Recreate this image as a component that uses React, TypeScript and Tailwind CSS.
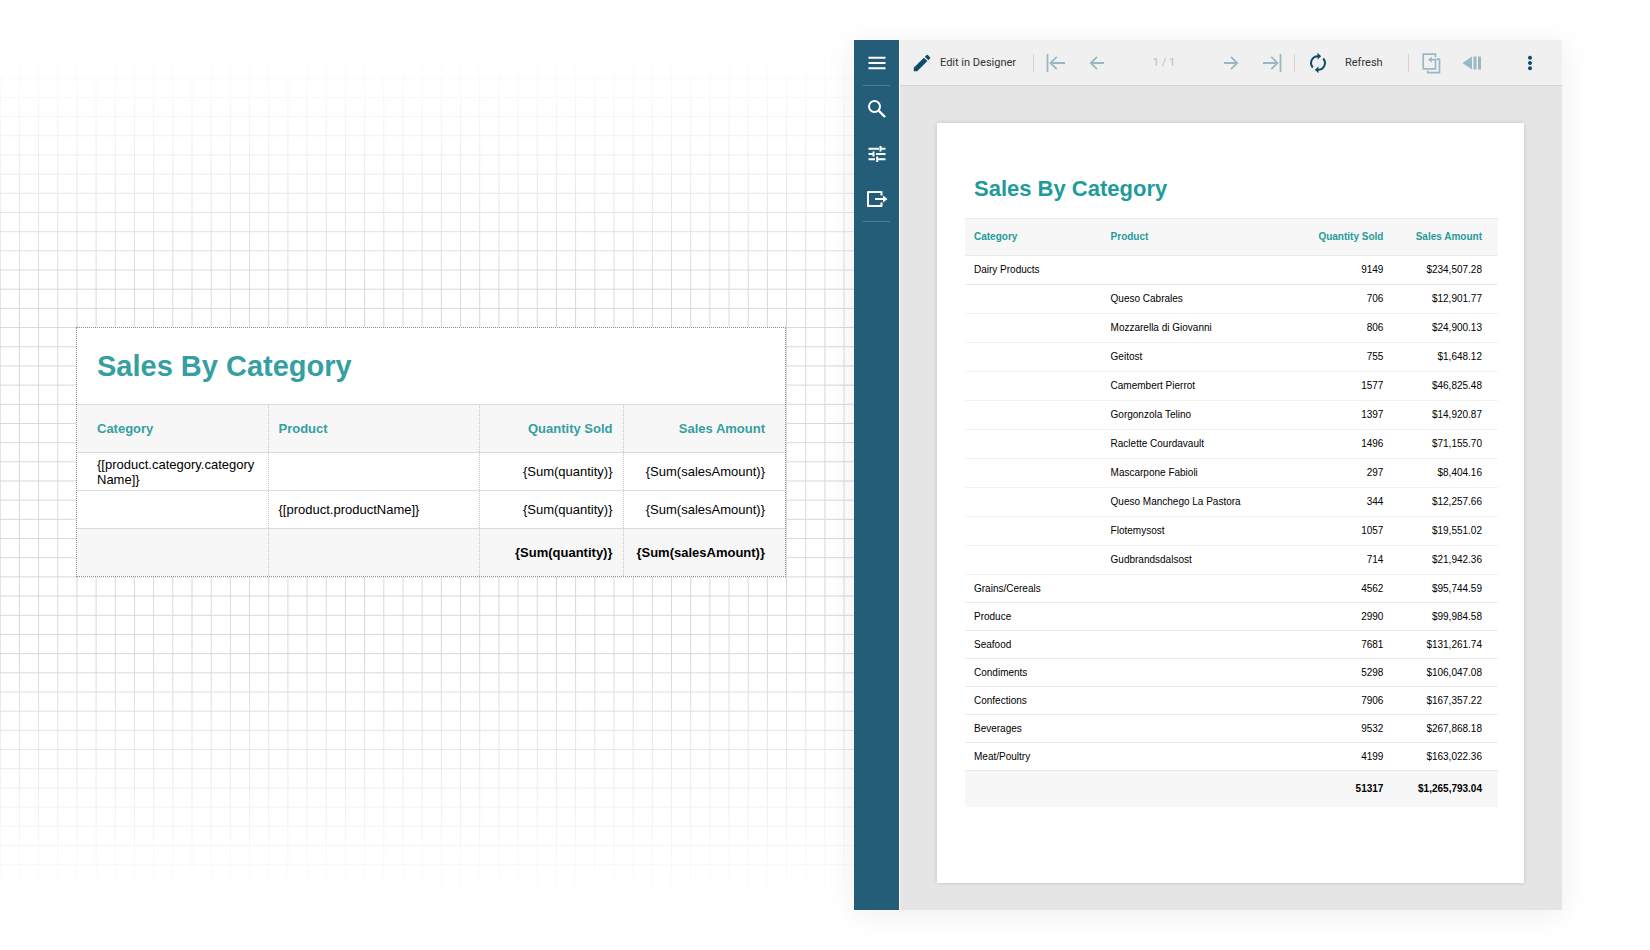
import type { ReactNode } from "react";

const PITCH = 19.18;

type SalesRow = {
  category?: string;
  product?: string;
  quantity: string;
  amount: string;
  expanded?: boolean;
};

const sales: SalesRow[] = [
  { category: "Dairy Products", quantity: "9149", amount: "$234,507.28", expanded: true },
  { product: "Queso Cabrales", quantity: "706", amount: "$12,901.77" },
  { product: "Mozzarella di Giovanni", quantity: "806", amount: "$24,900.13" },
  { product: "Geitost", quantity: "755", amount: "$1,648.12" },
  { product: "Camembert Pierrot", quantity: "1577", amount: "$46,825.48" },
  { product: "Gorgonzola Telino", quantity: "1397", amount: "$14,920.87" },
  { product: "Raclette Courdavault", quantity: "1496", amount: "$71,155.70" },
  { product: "Mascarpone Fabioli", quantity: "297", amount: "$8,404.16" },
  { product: "Queso Manchego La Pastora", quantity: "344", amount: "$12,257.66" },
  { product: "Flotemysost", quantity: "1057", amount: "$19,551.02" },
  { product: "Gudbrandsdalsost", quantity: "714", amount: "$21,942.36" },
  { category: "Grains/Cereals", quantity: "4562", amount: "$95,744.59" },
  { category: "Produce", quantity: "2990", amount: "$99,984.58" },
  { category: "Seafood", quantity: "7681", amount: "$131,261.74" },
  { category: "Condiments", quantity: "5298", amount: "$106,047.08" },
  { category: "Confections", quantity: "7906", amount: "$167,357.22" },
  { category: "Beverages", quantity: "9532", amount: "$267,868.18" },
  { category: "Meat/Poultry", quantity: "4199", amount: "$163,022.36" },
];

function rowClass(row: SalesRow) {
  if (row.product) return "h-[29px] border-b border-[#f1f1f1]";
  if (row.expanded) return "h-[29px] border-b border-[#e9e9e9]";
  return "h-[28px] border-b border-[#e9e9e9]";
}

function GridBackdrop() {
  const columns = Array.from({ length: 120 }, (_, i) => i * PITCH - 0.3);
  const rows = Array.from({ length: 52 }, (_, i) => 1 + i * PITCH);
  return (
    <svg
      aria-hidden="true"
      className="absolute inset-0 h-full w-full [mask-image:linear-gradient(to_bottom,transparent_5%,black_31%,black_69%,transparent_95%)]"
      fill="#d8d8d8"
    >
      {columns.map((x) => (
        <rect key={x} x={x} y="0" width="1" height="100%" />
      ))}
      {rows.map((y) => (
        <rect key={y} x="0" y={y} width="100%" height="1" />
      ))}
    </svg>
  );
}

function DesignTable() {
  const cell = "border-r border-dotted border-r-[#c8c8c8] last:border-r-0";
  return (
    <table className="w-full table-fixed border-collapse bg-white text-[13px] leading-[15px] text-black">
      <colgroup>
        <col className="w-[191px]" />
        <col className="w-[211px]" />
        <col className="w-[144px]" />
        <col />
      </colgroup>
      <thead>
        <tr className="h-[48px] border-y border-[#dcdcdc] bg-[#f7f7f7] text-[#359fa2]">
          <th className={`${cell} pr-2 pl-5 text-left`}>Category</th>
          <th className={`${cell} px-[10px] text-left`}>Product</th>
          <th className={`${cell} px-[10px] text-right`}>Quantity Sold</th>
          <th className={`${cell} pr-5 pl-2 text-right`}>Sales Amount</th>
        </tr>
      </thead>
      <tbody>
        <tr className="h-[38px] border-b border-[#dcdcdc]">
          <td className={`${cell} pr-2 pl-5`}>
            {"{[product.category.category"}
            <wbr />
            {"Name]}"}
          </td>
          <td className={`${cell} px-[10px]`} />
          <td className={`${cell} px-[10px] text-right`}>{"{Sum(quantity)}"}</td>
          <td className={`${cell} pr-5 pl-2 text-right`}>{"{Sum(salesAmount)}"}</td>
        </tr>
        <tr className="h-[38px] border-b border-[#dcdcdc]">
          <td className={`${cell} pr-2 pl-5`} />
          <td className={`${cell} px-[10px]`}>{"{[product.productName]}"}</td>
          <td className={`${cell} px-[10px] text-right`}>{"{Sum(quantity)}"}</td>
          <td className={`${cell} pr-5 pl-2 text-right`}>{"{Sum(salesAmount)}"}</td>
        </tr>
      </tbody>
      <tfoot>
        <tr className="h-[47px] bg-[#f7f7f7] font-bold">
          <td className={`${cell} pr-2 pl-5`} />
          <td className={`${cell} px-[10px]`} />
          <td className={`${cell} px-[10px] text-right`}>{"{Sum(quantity)}"}</td>
          <td className={`${cell} pr-5 pl-2 text-right`}>{"{Sum(salesAmount)}"}</td>
        </tr>
      </tfoot>
    </table>
  );
}

function ReportTable() {
  return (
    <table className="w-full table-fixed border-collapse text-[10px] leading-[12px] text-black">
      <colgroup>
        <col className="w-[26%]" />
        <col className="w-[34%]" />
        <col className="w-[20%]" />
        <col className="w-[20%]" />
      </colgroup>
      <thead>
        <tr className="h-[37px] border-y border-[#ebebeb] bg-[#f7f7f7] text-[#1f9b9b]">
          <th className="pl-[9px] text-left">Category</th>
          <th className="pl-[7px] text-left">Product</th>
          <th className="pr-2 text-right">Quantity Sold</th>
          <th className="pr-4 text-right">Sales Amount</th>
        </tr>
      </thead>
      <tbody>
        {sales.map((row) => (
          <tr key={row.category ?? row.product} className={rowClass(row)}>
            <td className="pl-[9px]">{row.category}</td>
            <td className="pl-[7px]">{row.product}</td>
            <td className="pr-2 text-right">{row.quantity}</td>
            <td className="pr-4 text-right">{row.amount}</td>
          </tr>
        ))}
      </tbody>
      <tfoot>
        <tr className="h-[36px] bg-[#f7f7f7] font-bold">
          <td />
          <td />
          <td className="pr-2 text-right">51317</td>
          <td className="pr-4 text-right">$1,265,793.04</td>
        </tr>
      </tfoot>
    </table>
  );
}

function Icon({ children, className = "size-6" }: { children: ReactNode; className?: string }) {
  return (
    <svg
      aria-hidden="true"
      viewBox="0 0 24 24"
      className={`shrink-0 ${className}`}
      fill="none"
      stroke="currentColor"
      strokeWidth="1.8"
    >
      {children}
    </svg>
  );
}

function SideBar() {
  return (
    <nav className="flex w-[45px] shrink-0 flex-col items-center bg-[#235d78] text-white">
      <button type="button" aria-label="Menu" className="flex h-[45px] items-center">
        <Icon>
          <path d="M3.500 6.700h17M3.500 12h17M3.500 17.300h17" strokeWidth="2" />
        </Icon>
      </button>
      <hr className="w-[27px] border-[#4b7c92]" />
      <button type="button" aria-label="Search" className="flex h-[45px] items-center">
        <Icon>
          <circle cx="9.500" cy="9.500" r="5.500" strokeWidth="2" />
          <path d="M13.500 13.500l6.500 6.500" strokeWidth="2.400" />
        </Icon>
      </button>
      <button type="button" aria-label="Parameters" className="flex h-[45px] items-center">
        <Icon>
          <path
            d="M3.500 6.700h10.500M15.500 4v5.400M15.500 6.700h5M3.500 12h5M8.500 9.400v5.200M11 12h9.500M3.500 17.300h6.500M12.200 14.600v5.400M12.200 17.300h8.300"
            strokeWidth="2"
          />
        </Icon>
      </button>
      <button type="button" aria-label="Export" className="flex h-[45px] items-center">
        <Icon>
          <path d="M16.500 8.500V5H3v14h13.500v-3.500M10 12h9" strokeWidth="2" strokeLinejoin="round" />
          <path d="M18 8.500l4.500 3.500-4.500 3.500z" fill="currentColor" stroke="none" />
        </Icon>
      </button>
      <hr className="w-[27px] border-[#4b7c92]" />
    </nav>
  );
}

function Separator() {
  return <span className="h-[18px] w-px shrink-0 bg-[#d4d4d4]" />;
}

function ToolBar() {
  return (
    <div
      role="toolbar"
      aria-label="Report viewer"
      className="flex h-[46px] items-center border-b border-[#d4d4d4] bg-[#f0f0f0] pl-[11px] font-[Roboto,sans-serif] text-[11px] text-[#333333]"
    >
      <button type="button" className="flex w-[122px] items-center gap-[7px] whitespace-nowrap">
        <Icon className="size-[22px] text-[#0f4c6b]">
          <path
            d="M3 17.250V21h3.750L17.810 9.940l-3.750-3.750zM20.710 7.040a1 1 0 0 0 0-1.410l-2.340-2.340a1 1 0 0 0-1.410 0l-1.830 1.830 3.750 3.750z"
            fill="currentColor"
            stroke="none"
          />
        </Icon>
        <span className="pt-[2px]">Edit in Designer</span>
      </button>
      <Separator />
      <button type="button" aria-label="First page" className="ml-[10px] text-[#9ab8c4]">
        <Icon>
          <path d="M3.500 3v18M21 12H6.500M12.700 5.800L6.500 12l6.200 6.200" />
        </Icon>
      </button>
      <button type="button" aria-label="Previous page" className="ml-[17px] text-[#9ab8c4]">
        <Icon>
          <path d="M19 12H6M12 5.800L5.800 12l6.200 6.200" />
        </Icon>
      </button>
      <span className="flex-1 pt-[2px] text-center text-[#b5c0c6]">1 / 1</span>
      <button type="button" aria-label="Next page" className="text-[#9ab8c4]">
        <Icon>
          <path d="M5 12h13M12 5.800l6.200 6.200-6.200 6.200" />
        </Icon>
      </button>
      <button type="button" aria-label="Last page" className="mr-[10px] ml-[17px] text-[#9ab8c4]">
        <Icon>
          <path d="M3 12h15M11.300 5.800l6.200 6.200-6.200 6.200M20.500 3v18" />
        </Icon>
      </button>
      <Separator />
      <button type="button" className="ml-[11px] flex w-[102px] items-center gap-[15px]">
        <Icon className="size-6 text-[#0f4c6b]">
          <path d="M12 5.200a6.800 6.800 0 0 0-5.200 11.300M12 18.800a6.800 6.800 0 0 0 5.200-11.300" strokeWidth="2" />
          <path d="M11.500 1.800v6.800L15.200 5.200zM12.500 22.200v-6.800L8.800 18.800z" fill="currentColor" stroke="none" />
        </Icon>
        <span className="pt-[2px]">Refresh</span>
      </button>
      <Separator />
      <button type="button" aria-label="Multipage mode" className="ml-[10px] text-[#9ab8c4]">
        <Icon>
          <path
            d="M16.500 6V3.200H4.200v14.600h12.300V8.700H10.500M17.500 8.200h3v13.500H8.700v-2.200"
            strokeWidth="1.700"
            strokeLinejoin="round"
          />
          <path d="M12.800 5.800v5.800L9 8.700z" fill="currentColor" stroke="none" />
        </Icon>
      </button>
      <button type="button" aria-label="Exit full screen" className="ml-[17px] text-[#9ab8c4]">
        <Icon>
          <path d="M2.500 12L12 5.500v13zM13.500 5.500h3v13h-3zM18 5.500h3v13h-3z" fill="currentColor" stroke="none" />
        </Icon>
      </button>
      <button type="button" aria-label="More options" className="mr-5 ml-[34px] text-[#0f4c6b]">
        <Icon>
          <path
            d="M12 4.700a2 2 0 1 0 .01 0zM12 10a2 2 0 1 0 .01 0zM12 15.300a2 2 0 1 0 .01 0z"
            fill="currentColor"
            stroke="none"
          />
        </Icon>
      </button>
    </div>
  );
}

export default function App() {
  return (
    <main className="grid min-h-screen grid-cols-[854fr_708fr_88fr] bg-white font-['Liberation_Sans',Arial,sans-serif]">
      <section className="relative">
        <GridBackdrop />
        <div className="relative mt-[327px] mr-[68px] ml-[76px] border border-dotted border-[#8c8c8c] bg-white">
          <h1 className="py-5 pl-5 text-[29px] leading-[36px] font-bold text-[#359fa2]">Sales By Category</h1>
          <DesignTable />
        </div>
      </section>
      <section className="relative my-10 flex shadow-[0_4px_30px_rgba(0,0,0,0.07)]">
        <SideBar />
        <div className="min-w-0 flex-1 border-l border-white bg-[#e5e5e5]">
          <ToolBar />
          <article className="mt-[37px] mr-[38px] mb-[26px] ml-[37px] bg-white pt-[52px] pr-[26px] pb-[76px] pl-7 shadow-[0_0_4px_rgba(0,0,0,0.15)]">
            <h2 className="mb-[15px] pl-[9px] text-[22px] leading-[28px] font-bold text-[#1f9b9b]">
              Sales By Category
            </h2>
            <ReportTable />
          </article>
        </div>
      </section>
    </main>
  );
}
